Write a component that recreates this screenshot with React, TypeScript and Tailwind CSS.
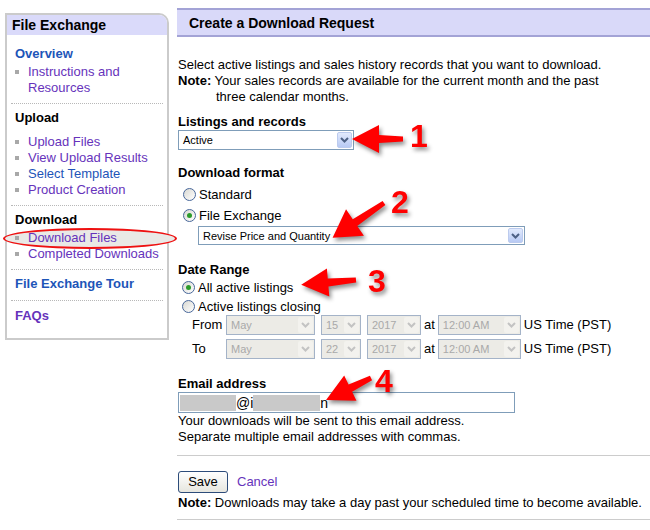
import React from "react";

const navLink = "text-[#6633bb]";
const navBlue = "text-[#1d55b8]";

function Bullet() {
  return <span className="mt-[6px] mr-[9px] h-[4px] w-[4px] shrink-0 bg-[#a8a8a8]" />;
}

function NavItem({ label, blue, className = "" }: { label: string; blue?: boolean; className?: string }) {
  return (
    <div className={`flex items-start ${className}`}>
      <Bullet />
      <span className={blue ? navBlue : navLink}>{label}</span>
    </div>
  );
}

function Sep({ className = "" }: { className?: string }) {
  return <div className={`mx-[4px] border-t border-dotted border-[#b8b8b8] ${className}`} />;
}

function Chevron({ color }: { color: string }) {
  return (
    <svg width="9" height="6" viewBox="0 0 9 6">
      <path d="M1 1 L4.5 4.5 L8 1" fill="none" stroke={color} strokeWidth="2" />
    </svg>
  );
}

function Select({
  text,
  w,
  h = 20,
  disabled,
}: {
  text: string;
  w: string;
  h?: number;
  disabled?: boolean;
}) {
  return (
    <div
      className={`flex items-center ${w} ${h === 19 ? "h-[19px]" : "h-[20px]"} border p-[1px] text-[11px] ${
        disabled ? "border-[#a4b3c8] bg-[#ecebe6] text-[#a9a9a9]" : "border-[#7f9db9] bg-white text-black"
      }`}
    >
      <span className="flex-1 truncate pl-[3px] leading-[14px]">{text}</span>
      <span
        className={`flex h-full w-[15px] items-center justify-center rounded-[2px] ${
          disabled ? "bg-[#f3f2ee]" : "border border-[#bccbee] bg-gradient-to-b from-[#e2eafd] to-[#b8caf4]"
        }`}
      >
        <Chevron color={disabled ? "#c3c3c3" : "#4d6185"} />
      </span>
    </div>
  );
}

function Radio({ checked }: { checked?: boolean }) {
  return (
    <span className="flex h-[13px] w-[13px] shrink-0 items-center justify-center rounded-full border border-[#48679a] bg-gradient-to-br from-[#d8d8d2] to-white">
      {checked && <span className="h-[5px] w-[5px] rounded-full bg-[#2b9b2b]" />}
    </span>
  );
}

function Arrow({ x, y, len, angle, hw = 14 }: { x: number; y: number; len: number; angle: number; hw?: number }) {
  const hl = 27;
  const b = len - hl;
  return (
    <polygon
      transform={`translate(${x} ${y}) rotate(${angle})`}
      points={`0,-2.5 ${b},-4 ${b},-${hw} ${len},0 ${b},${hw} ${b},4 0,2.5`}
      fill="#ff0000"
    />
  );
}

export default function App() {
  return (
    <div className="relative flex h-[530px] w-[650px] items-start gap-[8px] overflow-hidden bg-white pl-[5px] font-['Liberation_Sans',Arial,sans-serif] text-[13px] leading-[16px] text-black">
      {/* sidebar */}
      <div className="mt-[13px] h-[327px] w-[164px] shrink-0 rounded-tr-[10px] border-2 border-[#cbcbcb]">
        <div className="h-[20px] rounded-tr-[8px] bg-[#dadafa] px-[5px] text-[14px] font-bold leading-[21px]">
          File Exchange
        </div>
        <div className="px-[8px]">
          <div className={`mt-[11px] font-bold ${navBlue}`}>Overview</div>
          <div className="mt-[2px] flex items-start">
            <Bullet />
            <span className={navLink}>
              Instructions and
              <br />
              Resources
            </span>
          </div>
        </div>
        <Sep className="mt-[7px]" />
        <div className="px-[8px]">
          <div className="mt-[6px] font-bold">Upload</div>
          <NavItem className="mt-[8px]" label="Upload Files" />
          <NavItem label="View Upload Results" />
          <NavItem label="Select Template" blue />
          <NavItem label="Product Creation" />
        </div>
        <Sep className="mt-[7px]" />
        <div className="px-[8px]">
          <div className="mt-[6px] font-bold">Download</div>
          <NavItem className="relative z-10 mt-[2px]" label="Download Files" />
          <NavItem className="relative z-10" label="Completed Downloads" />
        </div>
        <Sep className="mt-[7px]" />
        <div className={`mt-[6px] px-[8px] font-bold ${navBlue}`}>File Exchange Tour</div>
        <Sep className="mt-[8px]" />
        <div className={`mt-[7px] px-[8px] font-bold ${navLink}`}>FAQs</div>
      </div>

      {/* main */}
      <div className="mt-[8px] flex-1">
        <div className="h-[29px] border-y-2 border-[#a3a3d6] bg-[#d9d9f9] px-[12px] text-[14px] font-bold leading-[26px]">
          Create a Download Request
        </div>
        <div className="pl-[1px]">
          <p className="mt-[20px]">Select active listings and sales history records that you want to download.</p>
          <p>
            <b>Note:</b> Your sales records are available for the current month and the past
          </p>
          <p className="pl-[38px]">three calendar months.</p>

          <div className="mt-[9px] font-bold">Listings and records</div>
          <Select text="Active" w="w-[176px]" />

          <div className="mt-[15px] font-bold">Download format</div>
          <div className="mt-[3px] flex h-[21px] items-center gap-[3px] pl-[5px]">
            <Radio />
            <span>Standard</span>
          </div>
          <div className="flex h-[21px] items-center gap-[3px] pl-[5px]">
            <Radio checked />
            <span>File Exchange</span>
          </div>
          <div className="pl-[20px]">
            <Select text="Revise Price and Quantity" w="w-[327px]" h={19} />
          </div>

          <div className="mt-[17px] font-bold">Date Range</div>
          <div className="flex h-[19px] items-center gap-[3px] pl-[4px]">
            <Radio checked />
            <span>All active listings</span>
          </div>
          <div className="flex h-[19px] items-center gap-[3px] pl-[4px]">
            <Radio />
            <span>Active listings closing</span>
          </div>
          {[
            ["From", "15"],
            ["To", "22"],
          ].map(([label, day], i) => (
            <div key={label} className={`flex items-center pl-[14px] ${i === 0 ? "mt-[-1px]" : "mt-[4px]"}`}>
              <span className="w-[34px]">{label}</span>
              <Select text="May" w="w-[89px]" disabled />
              <span className="w-[6px]" />
              <Select text={day} w="w-[40px]" disabled />
              <span className="w-[6px]" />
              <Select text="2017" w="w-[54px]" disabled />
              <span className="px-[3px]">at</span>
              <Select text="12:00 AM" w="w-[83px]" disabled />
              <span className="pl-[3px]">US Time (PST)</span>
            </div>
          ))}

          <div className="mt-[17px] font-bold">Email address</div>
          <div className="flex h-[21px] w-[337px] items-center border border-[#7f9db9] pl-[1px]">
            <span className="h-[16px] w-[56px] bg-[#c9c9c9]" />
            <span className="text-[14px]">@i</span>
            <span className="h-[16px] w-[67px] bg-[#c9c9c9]" />
            <span className="text-[14px]">n</span>
          </div>
          <p>Your downloads will be sent to this email address.</p>
          <p>Separate multiple email addresses with commas.</p>
        </div>
        <div className="mt-[10px] border-t border-[#cccccc]" />
        <div className="mt-[15px] flex items-center gap-[9px] pl-[1px]">
          <button className="h-[22px] w-[50px] rounded-[3px] border border-[#2d4c7a] bg-gradient-to-b from-white to-[#e6e6df] text-[13px]">
            Save
          </button>
          <span className={navLink}>Cancel</span>
        </div>
        <p className="mt-[2px] pl-[1px]">
          <b>Note:</b> Downloads may take a day past your scheduled time to become available.
        </p>
        <div className="mt-[8px] border-t border-[#cccccc]" />
      </div>

      {/* annotations */}
      <div className="absolute left-[3px] top-[228px] h-[21px] w-[174px] rounded-[50%] border-2 border-[#ee1111] bg-[#e9e9e6]" />
      <svg
        className="pointer-events-none absolute left-0 top-0 drop-shadow-[2px_3px_2px_rgba(0,0,0,0.45)]"
        width="650"
        height="530"
      >
        <Arrow x={403} y={139} len={51} angle={180} />
        <Arrow x={384} y={203} len={62} angle={146} hw={16} />
        <Arrow x={356} y={280} len={55} angle={175} />
        <Arrow x={371} y={378} len={50} angle={154} />
        <g fill="#ff0000" fontFamily="Liberation Sans, Arial, sans-serif" fontWeight="bold" fontSize="32">
          <text x="410" y="147">1</text>
          <text x="391" y="213">2</text>
          <text x="368" y="292">3</text>
          <text x="375" y="392">4</text>
        </g>
      </svg>
    </div>
  );
}
